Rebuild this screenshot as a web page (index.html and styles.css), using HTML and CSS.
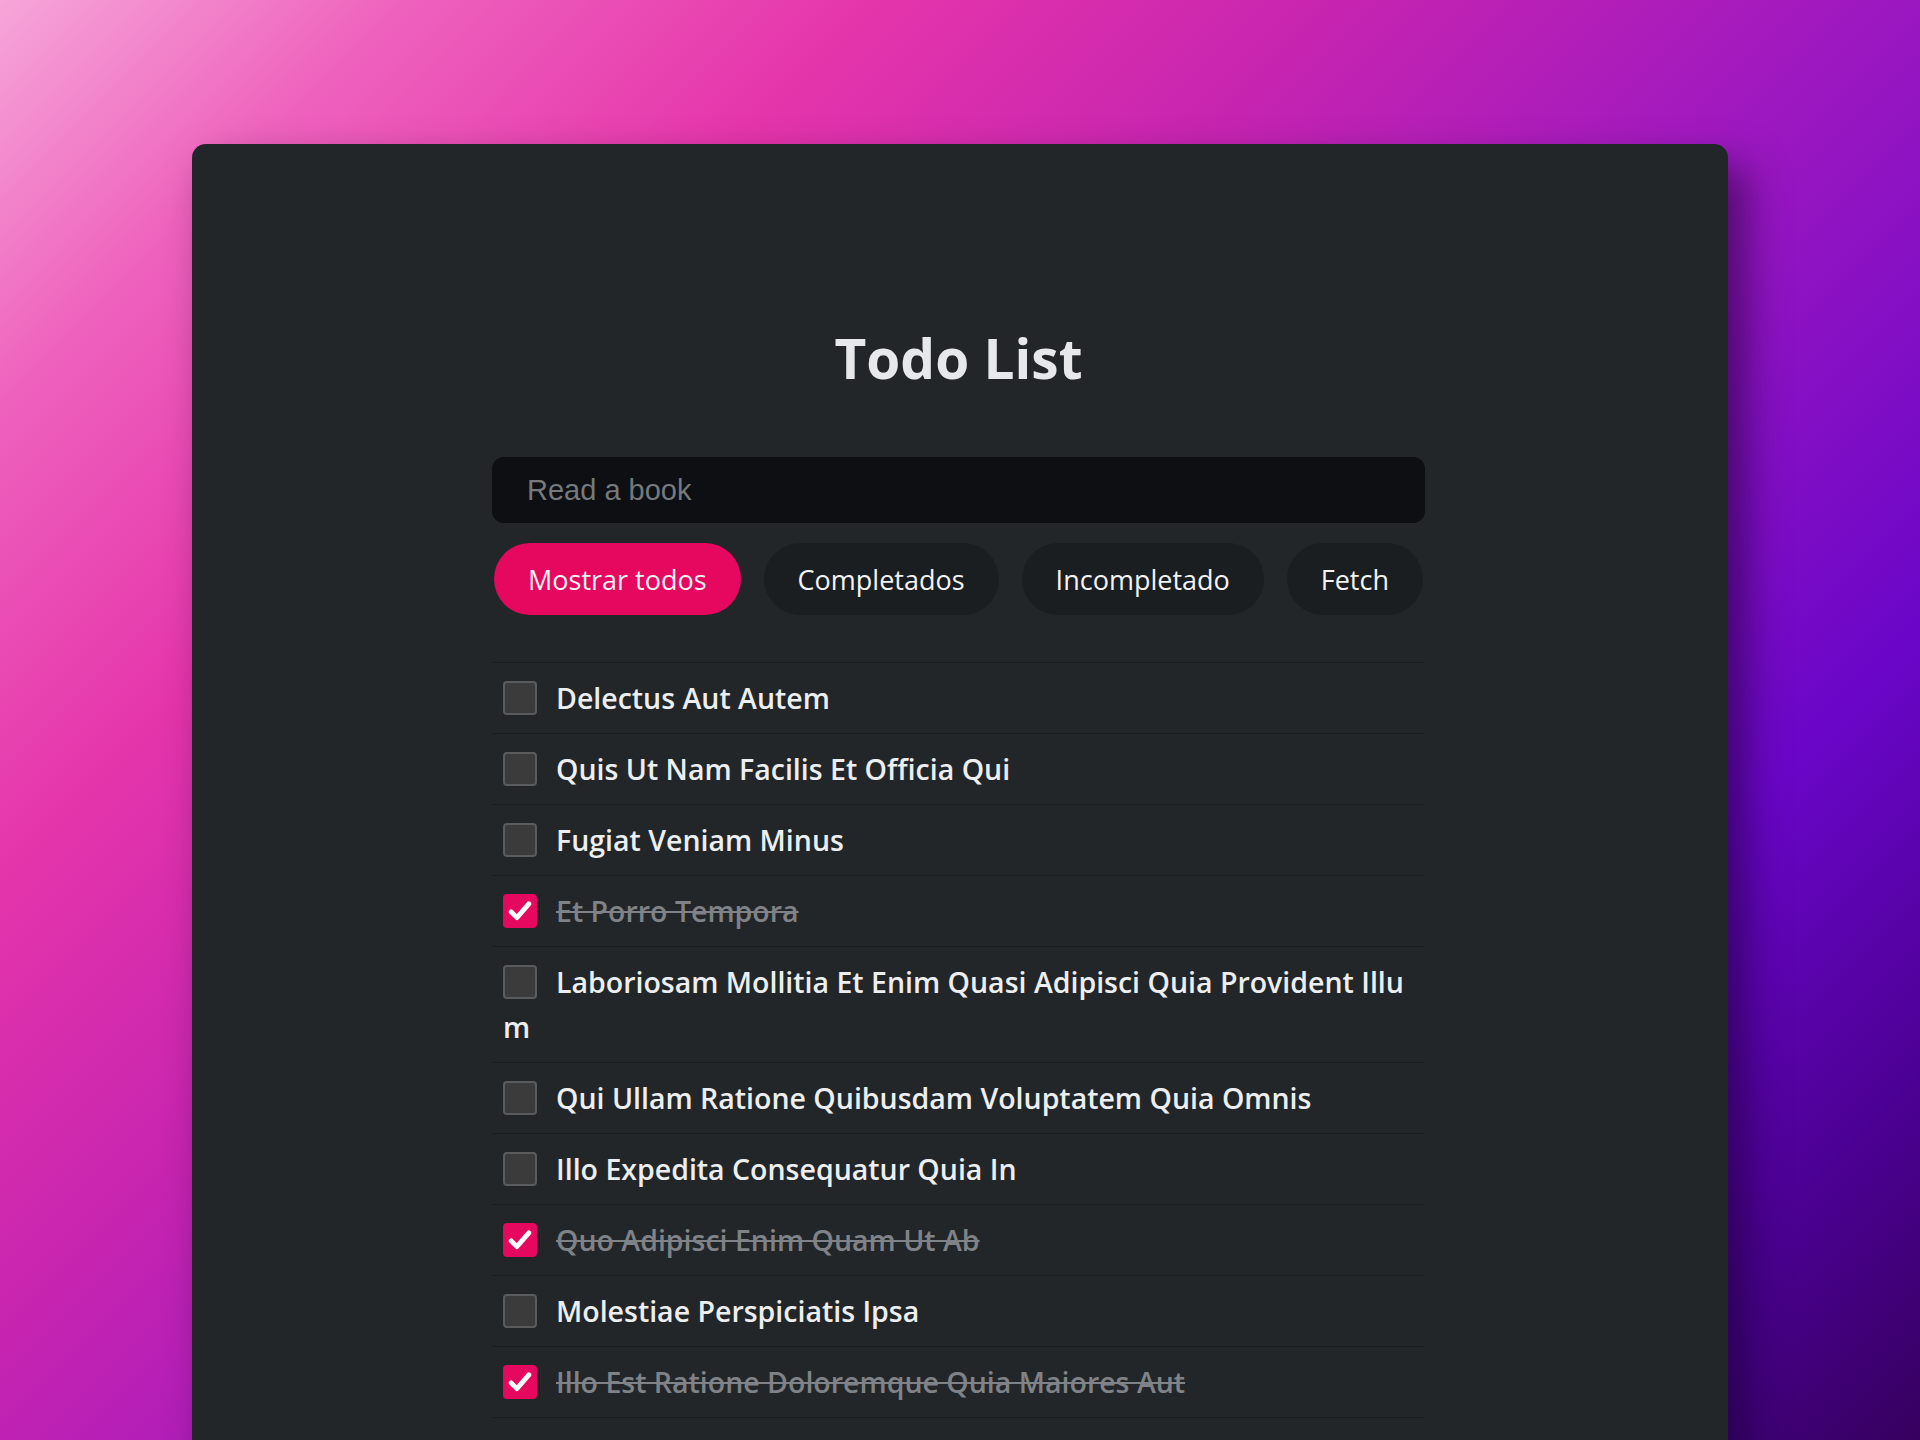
FILE: index.html
```html
<!DOCTYPE html>
<html lang="es">
<head>
<meta charset="utf-8">
<title>Todo List</title>
<link rel="stylesheet" href="styles.css">
</head>
<body>
<main class="card">
  <section class="todo">
    <h1 class="title">Todo List</h1>
    <input class="new-todo" type="text" placeholder="Read a book">
    <div class="filters">
      <button class="btn active">Mostrar todos</button>
      <button class="btn">Completados</button>
      <button class="btn">Incompletado</button>
      <button class="btn">Fetch</button>
    </div>
    <ul class="list">
      <li class="item"><span class="cb"></span><span class="label">Delectus Aut Autem</span></li>
      <li class="item"><span class="cb"></span><span class="label">Quis Ut Nam Facilis Et Officia Qui</span></li>
      <li class="item"><span class="cb"></span><span class="label">Fugiat Veniam Minus</span></li>
      <li class="item done"><span class="cb on"><svg viewBox="0 0 34 34" width="34" height="34"><path d="M7 18 L13.5 24.5 L27 9" fill="none" stroke="#fff" stroke-width="5.5" stroke-linecap="round" stroke-linejoin="round"/></svg></span><span class="label">Et Porro Tempora</span></li>
      <li class="item"><span class="cb"></span><span class="label">Laboriosam Mollitia Et Enim Quasi Adipisci Quia Provident Illum</span></li>
      <li class="item"><span class="cb"></span><span class="label">Qui Ullam Ratione Quibusdam Voluptatem Quia Omnis</span></li>
      <li class="item"><span class="cb"></span><span class="label">Illo Expedita Consequatur Quia In</span></li>
      <li class="item done"><span class="cb on"><svg viewBox="0 0 34 34" width="34" height="34"><path d="M7 18 L13.5 24.5 L27 9" fill="none" stroke="#fff" stroke-width="5.5" stroke-linecap="round" stroke-linejoin="round"/></svg></span><span class="label">Quo Adipisci Enim Quam Ut Ab</span></li>
      <li class="item"><span class="cb"></span><span class="label">Molestiae Perspiciatis Ipsa</span></li>
      <li class="item done"><span class="cb on"><svg viewBox="0 0 34 34" width="34" height="34"><path d="M7 18 L13.5 24.5 L27 9" fill="none" stroke="#fff" stroke-width="5.5" stroke-linecap="round" stroke-linejoin="round"/></svg></span><span class="label">Illo Est Ratione Doloremque Quia Maiores Aut</span></li>
    </ul>
  </section>
</main>
</body>
</html>
```
FILE: styles.css
```css
html, body {
  height: 100%;
  margin: 0;
  overflow: hidden;
}

body {
  background: linear-gradient(135deg, #f6a6d9 0%, #ee62bd 12%, #e535ab 26%, #c624b0 40%, #9d18c0 56%, #6a06c8 76%, #4a0090 90%, #36005e 100%);
  font-family: "Open Sans", "Noto Sans", sans-serif;
}

.card {
  box-sizing: border-box;
  width: 1536px;
  min-height: 1400px;
  margin: 144px auto 0;
  padding: 176px 0 0 300px;
  background: #222629;
  border-radius: 14px;
  box-shadow: 18px 22px 40px rgba(20, 0, 40, 0.55);
}

.todo {
  width: 933px;
}

.title {
  margin: 0;
  text-align: center;
  font-size: 55px;
  line-height: 76px;
  font-weight: 700;
  color: #e6e8ea;
}

.new-todo {
  display: block;
  box-sizing: border-box;
  width: 100%;
  height: 66px;
  margin-top: 61px;
  padding: 0 35px;
  border: none;
  border-radius: 12px;
  background: #0d0f12;
  font-family: "Liberation Sans", Arial, sans-serif;
  font-size: 29px;
  color: #dddddd;
  outline: none;
}

.new-todo::placeholder {
  color: #76797d;
}

.filters {
  display: flex;
  justify-content: space-between;
  margin-top: 20px;
  padding: 0 2px;
}

.btn {
  height: 72px;
  padding: 0 34px;
  border: none;
  border-radius: 36px;
  background: #1b1e21;
  font-family: "Open Sans", "Noto Sans", sans-serif;
  font-size: 27px;
  color: #f3f3f3;
}

.btn.active {
  background: #e6085f;
}

.list {
  list-style: none;
  margin: 47px 0 0;
  padding: 0;
  border-top: 1px solid #1a1d20;
}

.item {
  padding: 12.5px 11px;
  border-bottom: 1px solid #1a1d20;
  font-size: 28.5px;
  line-height: 45px;
  font-weight: 600;
  color: #eceef0;
  word-break: break-all;
}

.cb {
  display: inline-flex;
  align-items: center;
  justify-content: center;
  box-sizing: border-box;
  width: 34px;
  height: 34px;
  margin-right: 19px;
  vertical-align: -6px;
  border: 2px solid #5a5b5c;
  border-radius: 4px;
  background: #3b3b3b;
}

.cb.on {
  background: #e6085f;
  border-color: #e6085f;
}

.done .label {
  color: #7f8286;
  text-decoration: line-through;
}
```
